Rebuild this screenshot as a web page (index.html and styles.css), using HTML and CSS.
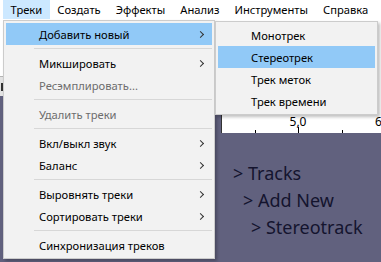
FILE: index.html
```html
<!DOCTYPE html>
<html lang="ru">
<head>
    <meta charset="UTF-8">
    <title>Треки</title>
    <link rel="stylesheet" href="styles.css">
</head>
<body>
    <div class="app">
        <nav class="menubar">
            <span class="menubar-item open">Треки</span>
            <span class="menubar-item">Создать</span>
            <span class="menubar-item">Эффекты</span>
            <span class="menubar-item">Анализ</span>
            <span class="menubar-item">Инструменты</span>
            <span class="menubar-item">Справка</span>
        </nav>

        <div class="workspace">
            <div class="track-col">
                <div class="toolbar"></div>
                <div class="track-ctl"><span class="ctl-mark"></span></div>
                <div class="track-dark"></div>
            </div>
            <div class="time-col">
                <div class="toolbar"></div>
                <div class="ruler">
                    <span class="tick minor" style="left: 33px"></span>
                    <span class="tick major" style="left: 76px"></span>
                    <span class="tick-label" style="left: 76px">5,0</span>
                    <span class="tick minor" style="left: 120px"></span>
                    <span class="tick major" style="left: 163px"></span>
                    <span class="tick-label edge" style="left: 153px">6</span>
                </div>
                <div class="tracks-area">
                    <div class="hint lvl1">&gt; Tracks</div>
                    <div class="hint lvl2">&gt; Add New</div>
                    <div class="hint lvl3">&gt; Stereotrack</div>
                </div>
            </div>
        </div>

        <!-- Dropdown: Треки -->
        <div class="menu main-menu">
            <div class="menu-item hover">Добавить новый <span class="arrow"></span></div>
            <div class="menu-sep"></div>
            <div class="menu-item">Микшировать <span class="arrow"></span></div>
            <div class="menu-item disabled">Ресэмплировать...</div>
            <div class="menu-sep"></div>
            <div class="menu-item disabled">Удалить треки</div>
            <div class="menu-sep"></div>
            <div class="menu-item">Вкл/выкл звук <span class="arrow"></span></div>
            <div class="menu-item">Баланс <span class="arrow"></span></div>
            <div class="menu-sep"></div>
            <div class="menu-item">Выровнять треки <span class="arrow"></span></div>
            <div class="menu-item">Сортировать треки <span class="arrow"></span></div>
            <div class="menu-sep"></div>
            <div class="menu-item">Синхронизация треков</div>
        </div>

        <!-- Submenu: Добавить новый -->
        <div class="menu sub-menu">
            <div class="menu-item">Монотрек</div>
            <div class="menu-item hover">Стереотрек</div>
            <div class="menu-item">Трек меток</div>
            <div class="menu-item">Трек времени</div>
        </div>
    </div>
</body>
</html>
```

FILE: styles.css
```css
body {
    margin: 0;
    padding: 0;
    font-family: "Noto Sans", "Open Sans", sans-serif;
    font-size: 11.2px;
    color: #000;
}

.app {
    position: relative;
    width: 381px;
    height: 262px;
    overflow: hidden;
    display: flex;
    flex-direction: column;
    background-color: #fff;
}

/* Menu bar */
.menubar {
    display: flex;
    height: 20px;
    padding-left: 3px;
    background-color: #fff;
}

.menubar-item {
    display: flex;
    align-items: center;
    padding: 0 7.5px;
    line-height: 19px;
    height: 19px;
}

.menubar-item.open {
    background-color: #cce8ff;
}

/* Background window */
.workspace {
    flex: 1;
    display: flex;
}

.track-col {
    width: 221px;
    display: flex;
    flex-direction: column;
}

.track-col .toolbar {
    height: 56px;
}

.track-ctl {
    height: 19px;
    background-color: #e3e3e3;
    border-top: 1px solid #b5b5b5;
    display: flex;
    align-items: center;
}

.ctl-mark {
    width: 2px;
    height: 8px;
    margin-left: 1px;
    background-color: #333;
}

.track-dark {
    flex: 1;
    background-color: #61617e;
}

.time-col {
    flex: 1;
    display: flex;
    flex-direction: column;
}

.time-col .toolbar {
    height: 95px;
}

.ruler {
    position: relative;
    height: 18px;
    background-color: #fff;
    border-left: 1px solid #333;
}

.tick {
    position: absolute;
    bottom: 0;
    width: 1px;
    background-color: #000;
}

.tick.major {
    height: 6px;
}

.tick.minor {
    height: 3px;
}

.tick-label {
    position: absolute;
    top: 0;
    transform: translateX(-50%);
    font-size: 12px;
    line-height: 14px;
}

.tick-label.edge {
    transform: none;
}

.tracks-area {
    flex: 1;
    background-color: #61617e;
    padding-top: 27px;
}

.hint {
    font-size: 18px;
    line-height: 27px;
    color: #14142e;
    white-space: nowrap;
}

.hint.lvl1 { padding-left: 12px; }
.hint.lvl2 { padding-left: 22px; }
.hint.lvl3 { padding-left: 30px; }

/* Popup menus */
.menu {
    position: absolute;
    background-color: #f2f2f2;
    border: 1px solid #cccccc;
    padding: 2px;
    box-shadow: 2px 2px 3px rgba(0, 0, 0, 0.25);
}

.main-menu {
    left: 3px;
    top: 20px;
    width: 206px;
}

.sub-menu {
    left: 215px;
    top: 21px;
    width: 157px;
}

.menu-item {
    display: flex;
    align-items: center;
    justify-content: space-between;
    height: 22px;
    padding-left: 33px;
    padding-right: 7px;
}

.menu-item.hover {
    background-color: #91c9f7;
}

.menu-item.disabled {
    color: #6d6d6d;
}

.menu-sep {
    height: 1px;
    margin: 3px 0 3px 28px;
    background-color: #d7d7d7;
}

.arrow {
    width: 4px;
    height: 4px;
    border-top: 1px solid #333;
    border-right: 1px solid #333;
    transform: rotate(45deg);
    margin-right: 2px;
}
```
